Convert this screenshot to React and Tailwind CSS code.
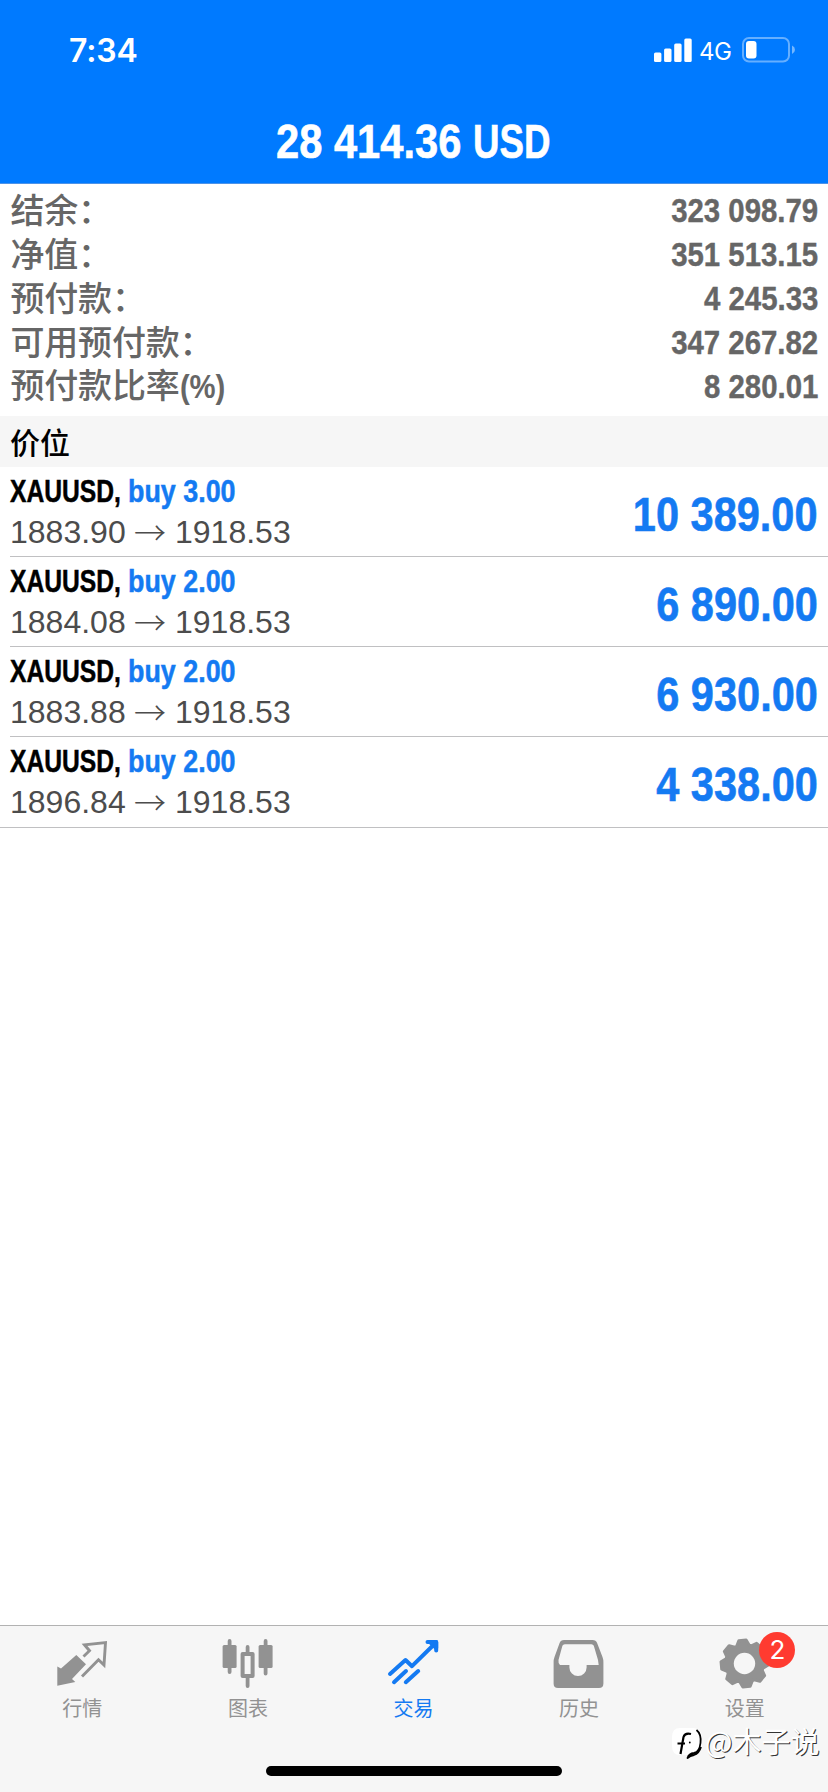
import React from 'react';

const account = [
  { label: '结余：', value: '323 098.79' },
  { label: '净值：', value: '351 513.15' },
  { label: '预付款：', value: '4 245.33' },
  { label: '可用预付款：', value: '347 267.82' },
  { label: '预付款比率', unit: '(%)', value: '8 280.01' },
];

const positions = [
  { symbol: 'XAUUSD', side: 'buy 3.00', open: '1883.90', current: '1918.53', profit: '10 389.00' },
  { symbol: 'XAUUSD', side: 'buy 2.00', open: '1884.08', current: '1918.53', profit: '6 890.00' },
  { symbol: 'XAUUSD', side: 'buy 2.00', open: '1883.88', current: '1918.53', profit: '6 930.00' },
  { symbol: 'XAUUSD', side: 'buy 2.00', open: '1896.84', current: '1918.53', profit: '4 338.00' },
];

const gearPath = () => {
  const points = [];
  for (let i = 0; i < 8; i++) {
    const mid = i * 45 - 95;
    [[-19, 19], [-9, 23.5], [9, 23.5], [19, 19]].forEach(([offset, r]) => {
      const a = ((mid + offset) * Math.PI) / 180;
      points.push(`${(27.5 + r * Math.cos(a)).toFixed(2)} ${(25.5 + r * Math.sin(a)).toFixed(2)}`);
    });
  }
  return `M${points.join('L')}Z`;
};

const QuotesIcon = () => (
  <svg className="w-14 h-[52px]" viewBox="0 0 56 52" fill="none">
    <path d="M2.3 28.5L6 30.5L21.3 17L31 26.2L17 41L20.3 44L2.3 47.8Z" fill="currentColor" />
    <path d="M28.5 18.5L34.5 12.7L29.5 6.8L50.5 4.6L49 27L43.5 21.8L27 38.6" stroke="currentColor" strokeWidth="2.9" />
  </svg>
);

const ChartIcon = () => (
  <svg className="w-14 h-[52px]" viewBox="0 0 56 52" fill="none" stroke="currentColor">
    <path d="M9.6 3V34M45.6 3V35.5M27.6 9V16M27.6 39V48" strokeWidth="3.8" strokeLinecap="round" />
    <rect x="2.6" y="7" width="14" height="23" rx="1.5" fill="currentColor" stroke="none" />
    <rect x="38.6" y="7" width="14" height="23" rx="1.5" fill="currentColor" stroke="none" />
    <rect x="22.6" y="16" width="10" height="22" strokeWidth="4" strokeLinejoin="round" />
  </svg>
);

const TradeIcon = () => (
  <svg className="w-14 h-[52px]" viewBox="0 0 56 52" fill="none" stroke="currentColor" strokeWidth="4" strokeLinecap="round" strokeLinejoin="round">
    <path d="M4 36L19.5 22L26 28.2L49 5.5M41.5 4H50.2V12.5M8 44.2L20 33M19.8 44.2L32.2 33" />
    <path d="M44 4H50.2V10Z" fill="currentColor" />
  </svg>
);

const HistoryIcon = () => (
  <svg className="w-14 h-[52px]" viewBox="0 0 56 52" fill="currentColor">
    <path
      fillRule="evenodd"
      d="M12 2H40.5Q44 2 45.2 5.2L50.5 19Q51.4 21.5 51.4 24V45.5Q51.4 50 47 50H6Q1.6 50 1.6 45.5V24Q1.6 21.5 2.5 19L7.5 5.2Q8.7 2 12 2ZM12.8 6.2Q11 6.2 10.4 7.8L6.5 22Q6 25 8 27H17.4V29.5A8.6 8.6 0 0 0 34.6 29.5V27H46.7L46 22L41.8 7.8Q41.2 6.2 39.4 6.2Z"
    />
  </svg>
);

const SettingsIcon = () => (
  <svg className="w-14 h-[52px]" viewBox="0 0 56 52" fill="none">
    <path d={gearPath()} fill="currentColor" stroke="currentColor" strokeWidth="3" strokeLinejoin="round" />
    <circle cx="27.5" cy="25.5" r="10.7" fill="#f6f6f6" />
  </svg>
);

const tabs = [
  { label: '行情', Icon: QuotesIcon },
  { label: '图表', Icon: ChartIcon },
  { label: '交易', Icon: TradeIcon, active: true },
  { label: '历史', Icon: HistoryIcon },
  { label: '设置', Icon: SettingsIcon, badge: 2 },
];

const StatusBar = () => (
  <div className="h-[99px] pt-px flex items-center justify-between pl-[69px] pr-[33px]">
    <span className="pt-px text-[32px] leading-10 font-semibold font-['Inter',sans-serif] tracking-[-0.1px]">7:34</span>
    <div className="flex items-center">
      <svg className="w-[38px] h-6" viewBox="0 0 38 24" fill="white">
        <rect x="0" y="14.5" width="7.4" height="9.5" rx="1.6" />
        <rect x="10.1" y="10.5" width="7.4" height="13.5" rx="1.6" />
        <rect x="20.2" y="5.5" width="7.4" height="18.5" rx="1.6" />
        <rect x="30.3" y="0.5" width="7.4" height="23.5" rx="1.6" />
      </svg>
      <span className="ml-[7px] pt-[3px] w-[33px] text-[24px] leading-8 font-['Inter',sans-serif] tracking-[-0.4px]">4G</span>
      <svg className="ml-[10px] w-[53px] h-[26px]" viewBox="0 0 53 26" fill="none">
        <rect x="1" y="1" width="46" height="23.5" rx="6" stroke="white" strokeOpacity="0.4" strokeWidth="2" />
        <rect x="4" y="4" width="10.5" height="17.5" rx="3" fill="white" />
        <path d="M50 8.5Q53 10 53 12.8T50 17Z" fill="white" fillOpacity="0.45" />
      </svg>
    </div>
  </div>
);

const App = () => {
  return (
    <div className="relative w-[828px] h-[1792px] flex flex-col overflow-hidden bg-white font-['Liberation_Sans','Noto_Sans_CJK_SC',sans-serif]">
      {/* Header */}
      <header className="h-[184px] bg-[#007aff] text-white border-b border-[#4d93e8]">
        <StatusBar />
        <h1 className="h-[84px] pt-px pl-[276px] flex items-center text-[48px] font-bold whitespace-nowrap [-webkit-text-stroke:0.6px]">
          <span className="w-[197px] origin-left scale-x-[0.868]">28 414.36</span>
          <span className="origin-left scale-x-[0.765]">USD</span>
        </h1>
      </header>

      {/* Account summary */}
      <section className="h-[232px] pt-[3px] pl-[10.5px] pr-[10px] text-[#666]">
        {account.map(({ label, unit, value }) => (
          <div key={label} className="h-11 flex items-center justify-between">
            <span className="text-[34px] leading-[44px] tracking-[-0.2px] font-medium font-['Noto_Sans_CJK_SC',sans-serif] whitespace-nowrap">
              {label}
              {unit && <span className="inline-block font-bold font-['Liberation_Sans',sans-serif] origin-left scale-x-[0.86]">{unit}</span>}
            </span>
            <span className="pt-[3px] text-[34px] leading-[41px] font-bold origin-right scale-x-[0.864] [-webkit-text-stroke:0.4px]">{value}</span>
          </div>
        ))}
      </section>

      <div className="h-[51px] pl-[10px] pb-px flex items-center bg-[#f6f6f6] text-black text-[30px] font-medium font-['Noto_Sans_CJK_SC',sans-serif]">
        价位
      </div>

      {/* Positions */}
      <ul className="border-b border-[#c0c0c2]">
        {positions.map((p, i) => (
          <li key={i} className="pl-[10px]">
            <div className={`h-[90px] pr-[10px] flex justify-between ${i < positions.length - 1 ? 'border-b border-[#c0c0c2]' : ''}`}>
              <div className="pt-[3px]">
                <div className="flex h-[41px] items-center text-[32px] font-bold whitespace-nowrap [-webkit-text-stroke:0.5px]">
                  <span className="w-[118px] text-black origin-left scale-x-[0.77]">{p.symbol},</span>
                  <span className="text-[#147af2] origin-left scale-x-[0.84]">{p.side}</span>
                </div>
                <div className="flex h-[41px] items-center text-[32px] text-[#4c4c4c] whitespace-nowrap">
                  <span className="w-[124px]">{p.open}</span>
                  <span className="w-[41px] pb-[2px] font-light font-['Noto_Sans_CJK_SC',sans-serif]">→</span>
                  <span>{p.current}</span>
                </div>
              </div>
              <span className="pt-[20px] text-[48px] leading-[56px] font-bold text-[#147af2] origin-right scale-x-[0.865] [-webkit-text-stroke:0.6px]">{p.profit}</span>
            </div>
          </li>
        ))}
      </ul>

      <main className="flex-1" />

      {/* Tab bar */}
      <nav className="h-[167px] flex flex-col items-center bg-[#f6f6f6] border-t border-[#b2b2b2]">
        <div className="w-full h-[140px] grid grid-cols-5">
          {tabs.map(({ label, Icon, active, badge }) => (
            <div key={label} className={`relative flex flex-col items-center pt-3 ${active ? 'text-[#147af2]' : 'text-[#929292]'}`}>
              <Icon />
              <span className="mt-1 pr-px text-[20px] leading-[28px] font-['Noto_Sans_CJK_SC',sans-serif]">{label}</span>
              {badge && (
                <span className="absolute top-[6px] left-[97px] w-9 h-9 rounded-full bg-[#ff3b30] text-white text-[26px] leading-9 text-center font-['Inter',sans-serif]">
                  {badge}
                </span>
              )}
            </div>
          ))}
        </div>
        <div className="w-[296px] h-[10px] rounded-full bg-black" />
      </nav>

      {/* Author mark */}
      <div className="absolute left-[671px] top-[1721px] flex items-center text-white">
        <svg className="w-[34px] h-[38px]" viewBox="0 0 34 38" fill="none">
          <path d="M9 6H22Q31 6 31 16V22Q31 30 23 33H9Q1 33 1 24V15Q1 6 9 6Z" fill="white" />
          <path d="M25.5 8Q30.5 12 29.5 21T23 31Q18 31.5 16.5 36Q19 33.5 23 33Q28 31.5 30 25" stroke="black" strokeWidth="1.8" strokeLinejoin="round" />
          <path d="M20 12Q14 10.5 12.5 15L9.5 32" stroke="black" strokeWidth="2.2" />
          <path d="M6.5 21.5H14" stroke="black" strokeWidth="2" />
          <circle cx="18.8" cy="20.5" r="0.9" fill="black" />
        </svg>
        <span className="pb-[2px] text-[29px] leading-[38px] font-normal font-['Noto_Sans_CJK_SC',sans-serif] whitespace-nowrap [text-shadow:1px_1px_0.5px_#333]">@木子说</span>
      </div>
    </div>
  );
};

export default App;
